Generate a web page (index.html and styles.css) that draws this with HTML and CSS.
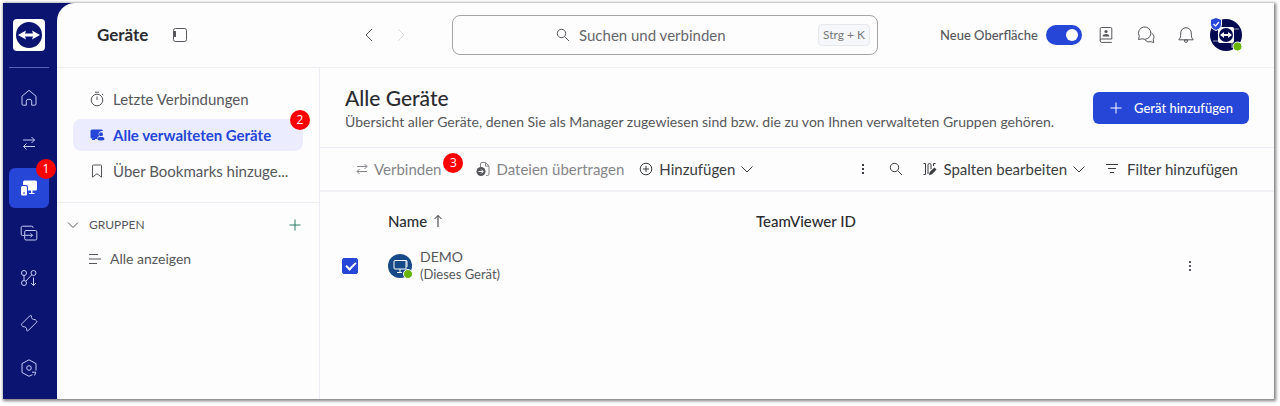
FILE: index.html
```
<!DOCTYPE html>
<html lang="de">
<head>
  <meta charset="UTF-8" />
  <meta name="viewport" content="width=device-width, initial-scale=1.0"/>
  <title>Alle Geräte</title>
  <link rel="stylesheet" href="styles.css">
</head>
<body>
  <div class="app">
    <nav class="rail" aria-label="Hauptnavigation">
      <a href="#" class="logo" aria-label="TeamViewer">
        <svg width="32" height="32" viewBox="0 0 32 32">
          <rect width="32" height="32" rx="4" fill="#fff"/>
          <circle cx="16" cy="16" r="13" fill="#0b1571"/>
          <path d="M5 16l8-4.500-1 3h8l-1-3 8 4.500-8 4.500 1-3h-8l1 3z" fill="#fff"/>
        </svg>
      </a>
      <ul class="rail-list">
        <li><a href="#" aria-label="Start"><svg width="18" height="18" viewBox="0 0 18 18"><path d="M2 7.200L9 1.300l7 5.900v7.800q0 1.200-1.200 1.200h-3.100v-4q0-2-2.700-2t-2.700 2v4H3.200Q2 16.200 2 15z"/></svg></a></li>
        <li><a href="#" aria-label="Verbindungen"><svg width="18" height="18" viewBox="0 0 18 18"><path d="M3 6h11.500M11.500 3l3 3-3 3M15 12.500H3.500M6.500 9.500l-3 3 3 3"/></svg></a></li>
        <li>
          <a href="#" class="active" aria-label="Geräte"><svg width="18" height="18" viewBox="0 0 18 18"><path class="solid" d="M4.500 1.500h11q1.500 0 1.500 1.500v7q0 1.500-1.500 1.500h-3v2.500h2v1H9v-1h2v-2.500H8V8q0-2-2-2H3V3q0-1.500 1.500-1.500z"/><path class="solid" fill-rule="evenodd" d="M2.500 7h3Q7 7 7 8.500v6.500q0 1.500-1.500 1.500h-3Q1 16.500 1 15V8.500Q1 7 2.500 7zM3 13.500v1h2v-1z"/></svg></a>
          <span class="marker">1</span>
        </li>
        <li><a href="#" aria-label="Sitzungen"><svg width="18" height="18" viewBox="0 0 18 18"><path d="M4 11.500H2.500q-1.300 0-1.300-1.300V3.500q0-1.300 1.300-1.300h9.200q1.300 0 1.300 1.300V4M6 6.500h9.500q1.300 0 1.300 1.300v6.900q0 1.300-1.300 1.300H6q-1.300 0-1.300-1.300V7.800Q4.700 6.500 6 6.500zM5 11.300h7.500M10.500 9.300l2 2-2 2"/></svg></a></li>
        <li><a href="#" aria-label="Automatisierung"><svg width="18" height="18" viewBox="0 0 18 18"><circle cx="4" cy="4" r="2.500"/><circle cx="4" cy="14" r="2.500"/><circle cx="13.500" cy="4" r="2.500"/><path d="M4 6.500v5M5.800 12.200l6-6.400M13.500 8.500v8M11 14l2.500 2.500L16 14"/></svg></a></li>
        <li><a href="#" aria-label="Tickets"><svg width="18" height="18" viewBox="0 0 18 18"><path d="M1.800 9.800l8-8q.8-.8 1.600 0-.3 2 .8 3t3 .8l1.300 1.300q.7.700 0 1.400l-8.200 8.200q-.8.800-1.600 0 .3-2-.8-3t-3-.8L1.800 11.400q-.8-.8 0-1.600z"/></svg></a></li>
        <li><a href="#" aria-label="Administration"><svg width="18" height="18" viewBox="0 0 18 18"><path d="M12.500 15.700L9 17.300l-7-3.800V4.600L9 .8l7 3.800v6.900M12 13.200h3.800M15.800 13.200l-1.300 3.300"/><circle cx="9" cy="9" r="2.300"/></svg></a></li>
      </ul>
    </nav>

    <div class="page">
      <header class="topbar">
        <div class="topbar-title">
          <h1>Geräte</h1>
          <button type="button" aria-label="Seitenleiste"><svg width="16" height="16" viewBox="0 0 16 16"><rect x="1.500" y="1.500" width="13" height="13" rx="2"/><path d="M3 4v6" stroke-width="2"/></svg></button>
        </div>
        <div class="history">
          <button type="button" aria-label="Zurück"><svg width="16" height="16" viewBox="0 0 16 16"><path d="M11 2L5 8l6 6"/></svg></button>
          <button type="button" aria-label="Vorwärts" disabled><svg width="16" height="16" viewBox="0 0 16 16"><path d="M5 2l6 6-6 6"/></svg></button>
        </div>
        <label class="search">
          <svg width="14" height="14" viewBox="0 0 14 14"><circle cx="5.500" cy="5.500" r="4.200"/><path d="M8.700 8.700L13 13"/></svg>
          <input type="text" placeholder="Suchen und verbinden" aria-label="Suchen und verbinden">
          <kbd>Strg + K</kbd>
        </label>
        <div class="tools">
          <label class="switch">Neue Oberfläche <input type="checkbox" checked></label>
          <button type="button" aria-label="Kontakte"><svg width="18" height="18" viewBox="0 0 18 18"><path d="M4.500 1.500h9q1.300 0 1.300 1.300V13H4.700q-1.500 0-1.500 1.700t1.500 1.700h10.100M3.200 14.500V2.800q0-1.300 1.300-1.300"/><circle class="solid" cx="9" cy="5.500" r="1.600"/><path class="solid" d="M5.800 10.500V9.700q0-1.700 3.200-1.700t3.200 1.700v.8z"/></svg></button>
          <button type="button" aria-label="Chat"><svg width="18" height="18" viewBox="0 0 18 18"><path d="M1.500 13.500l.8-3.300a6.200 6.200 0 1 1 2.900 2.600zM14.500 7q4 3 1.700 6.500l.6 3-3-.8q-3.300 1.200-5.600-1.500"/></svg></button>
          <button type="button" aria-label="Benachrichtigungen"><svg width="18" height="18" viewBox="0 0 18 18"><path d="M1.800 13.800q1.900-1.800 1.900-4.600V7a5.300 5.300 0 0 1 10.600 0v2.200q0 2.800 1.900 4.600z"/><path d="M7.300 14q0 2.500 1.700 2.500t1.700-2.500z"/></svg></button>
          <a href="#" class="avatar" aria-label="Profil">
            <svg width="34" height="36" viewBox="0 0 34 36">
              <circle cx="17" cy="18" r="16" fill="#050a50"/>
              <rect x="9" y="10" width="16" height="16" rx="2" fill="#fff"/>
              <path d="M11 10V5M25 12h5M23 26v5M9 24H4" stroke="#fff" stroke-width="1" opacity=".6"/>
              <circle cx="17" cy="18" r="7" fill="#050a50"/>
              <path d="M11 18l4-3v2h4v-2l4 3-4 3v-2h-4v2z" fill="#fff"/>
              <path d="M1.500 2.500L7 .5l5.500 2v4.500q0 4.500-5.500 6.500Q1.500 11.500 1.500 7z" fill="#2546d6" stroke="#fff"/>
              <path d="M4.500 7l2 2 3.500-4" fill="none" stroke="#fff" stroke-width="1.200"/>
              <circle cx="28.500" cy="29.500" r="4.500" fill="#68b500" stroke="#fff"/>
            </svg>
          </a>
        </div>
      </header>

      <div class="content">
        <aside class="sidebar">
          <ul class="views">
            <li><a href="#"><svg width="16" height="16" viewBox="0 0 16 16"><circle cx="8" cy="9" r="5.800"/><path d="M8 5.500V9M6 1.200h4M13 3l1.200 1.200"/></svg>Letzte Verbindungen</a></li>
            <li>
              <a href="#" class="active"><svg width="16" height="16" viewBox="0 0 16 16"><path class="solid" d="M3 2.500h9.500Q14 2.500 14 4q-4-.5-4.500 3 .2 1.500 1 2-2.300.5-2.500 3H6v1H3v-1l1-.5H3Q1.500 11.500 1.500 10V4Q1.500 2.500 3 2.500z"/><circle class="solid" cx="12" cy="7.200" r="2"/><path class="solid" d="M8.500 12.500v-1q.2-1.500 2-1.500h3q1.600 0 1.800 1.500v1q-.2 1-3.300 1t-3.500-1z"/></svg>Alle verwalteten Geräte</a>
              <span class="marker">2</span>
            </li>
            <li><a href="#"><svg width="16" height="16" viewBox="0 0 16 16"><path d="M3.500 14.200V2.800q0-.8.800-.8h7.400q.8 0 .8.800v11.400L8 10.700z"/></svg>Über Bookmarks hinzuge...</a></li>
          </ul>
          <div class="groups">
            <div class="groups-header">
              <button type="button" class="groups-toggle"><svg width="12" height="12" viewBox="0 0 12 12"><path d="M1 3.500l5 5 5-5"/></svg>GRUPPEN</button>
              <button type="button" class="groups-add" aria-label="Gruppe hinzufügen"><svg width="12" height="12" viewBox="0 0 12 12"><path d="M6 .5v11M.5 6h11"/></svg></button>
            </div>
            <a href="#" class="show-all"><svg width="14" height="14" viewBox="0 0 14 14"><path d="M1 2.500h9M1 7h12M1 11.500h8"/></svg>Alle anzeigen</a>
          </div>
        </aside>

        <main class="main">
          <div class="intro">
            <div class="intro-text">
              <h2>Alle Geräte</h2>
              <p>Übersicht aller Geräte, denen Sie als Manager zugewiesen sind bzw. die zu von Ihnen verwalteten Gruppen gehören.</p>
            </div>
            <button type="button" class="primary"><svg width="12" height="12" viewBox="0 0 12 12"><path d="M6 .5v11M.5 6h11"/></svg>Gerät hinzufügen</button>
          </div>

          <div class="toolbar">
            <div class="connect">
              <button type="button" disabled><svg width="12" height="12" viewBox="0 0 12 12"><path d="M1 3.500h10M8.500 1L11 3.500 8.500 6M11 8.500H1M3.500 6L1 8.500 3.500 11"/></svg>Verbinden</button>
              <span class="marker">3</span>
            </div>
            <button type="button" disabled><svg width="14" height="16" viewBox="0 0 14 16"><path d="M4.500 6V3q0-1.500 1.500-1.500h3.500l3.500 3.500v8q0 1.500-1.500 1.500H10M9.500 1.500V5H13"/><circle cx="5" cy="10.500" r="4.500" fill="#56575c" stroke="none"/><path d="M2.500 10.500h4.500M5.200 8.500l2 2-2 2" stroke="#fff"/></svg>Dateien übertragen</button>
            <button type="button"><svg width="14" height="14" viewBox="0 0 14 14"><circle cx="7" cy="7" r="5.800"/><path d="M7 4v6M4 7h6"/></svg>Hinzufügen<svg width="12" height="12" viewBox="0 0 12 12"><path d="M.5 3.500L6 9l5.500-5.500"/></svg></button>
            <div class="toolbar-right">
              <button type="button" aria-label="Mehr"><svg width="12" height="12" viewBox="0 0 12 12"><path d="M5 1h2v2H5zM5 5h2v2H5zM5 9h2v2H5z" class="dots"/></svg></button>
              <button type="button" aria-label="Suchen"><svg width="14" height="14" viewBox="0 0 14 14"><circle cx="5.500" cy="5.500" r="4.200"/><path d="M8.700 8.700L13 13"/></svg></button>
              <button type="button"><svg width="14" height="14" viewBox="0 0 14 14"><path d="M.5 1.500h2v11h-2M5 12V3q0-1.500 1.500-1.500T8 3v4M10.500 4V1.500h2"/><path class="solid" d="M6 13.200l.7-3.200L11.500 5.500l2 2L9 12.300z"/></svg>Spalten bearbeiten<svg width="12" height="12" viewBox="0 0 12 12"><path d="M.5 3.500L6 9l5.500-5.500"/></svg></button>
              <button type="button" class="filter"><svg width="14" height="14" viewBox="0 0 14 14"><path d="M1 2.500h12M3 6.500h8M5 10.500h4"/></svg>Filter hinzufügen</button>
            </div>
          </div>

          <table class="devices">
            <thead>
              <tr>
                <th class="col-check"></th>
                <th class="col-name"><button type="button">Name<svg width="10" height="14" viewBox="0 0 10 14"><path d="M5 13V1.500M1.500 5L5 1.500 8.500 5"/></svg></button></th>
                <th>TeamViewer ID</th>
                <th class="col-more"></th>
              </tr>
            </thead>
            <tbody>
              <tr>
                <td class="col-check"><input type="checkbox" aria-label="DEMO" checked></td>
                <td>
                  <div class="device">
                    <svg width="26" height="26" viewBox="0 0 26 26">
                      <circle cx="12" cy="13" r="12" fill="#174a86" stroke="none"/>
                      <path d="M7 7.500h11v8.500H7q-1 0-1-1V8.500q0-1 1-1zM18 7.500q1 0 1 1V14M12 16v3M9 19.500h5" stroke="#fff"/>
                      <circle cx="20" cy="21" r="4.500" fill="#68b500" stroke="#fff"/>
                    </svg>
                    <div>
                      <div class="device-name">DEMO</div>
                      <div class="device-note">(Dieses Gerät)</div>
                    </div>
                  </div>
                </td>
                <td></td>
                <td class="col-more"><button type="button" aria-label="Optionen"><svg width="12" height="12" viewBox="0 0 12 12"><path d="M5 1h2v2H5zM5 5h2v2H5zM5 9h2v2H5z" class="dots"/></svg></button></td>
              </tr>
            </tbody>
          </table>
        </main>
      </div>
    </div>
  </div>
</body>
</html>
```
FILE: styles.css
```
* { box-sizing: border-box; }
body {
  margin: 0;
  padding: 3px 6px 7px 3px;
  background: #fff;
  color: #56575c;
  font-family: Lato, "Open Sans", sans-serif;
  font-size: 15px;
  line-height: 20px;
}
h1, h2, p, ul {
  margin: 0;
  padding: 0;
}
ul { list-style: none; }
a {
  color: inherit;
  text-decoration: none;
}
button {
  display: flex;
  align-items: center;
  padding: 0;
  border: none;
  background: none;
  color: inherit;
  font: inherit;
  white-space: nowrap;
  cursor: pointer;
}
svg {
  display: block;
  flex: none;
  fill: none;
  stroke: currentColor;
  stroke-linejoin: round;
}
.logo svg, .avatar svg { stroke: none; }
.solid, .dots {
  fill: currentColor;
  stroke: none;
}
.app {
  display: flex;
  min-height: calc(100vh - 10px);
  background: #0b1571;
  box-shadow: 1px 1px 3px 1px rgba(0,0,0,0.5);
}

/* left icon rail */
.rail {
  flex: none;
  width: 54px;
  padding: 16px 6px 0;
  color: #c5caf5;
}
.logo {
  display: block;
  width: 40px;
  padding: 0 4px 16px;
  border-bottom: 1px solid #5a62b0;
}
.rail-list {
  display: grid;
  gap: 5px;
  width: 40px;
  margin-top: 10px;
}
.rail-list li, .views li, .connect { position: relative; }
.rail-list a {
  display: flex;
  align-items: center;
  justify-content: center;
  height: 40px;
  border-radius: 6px;
}
.rail-list .active {
  background: #2546d6;
  color: #fff;
}
.marker {
  position: absolute;
  top: -9px;
  right: -7px;
  width: 20px;
  height: 20px;
  border-radius: 50%;
  background: #f00;
  color: #fff;
  font: 12px/20px "Open Sans", sans-serif;
  text-align: center;
}

/* top bar */
.page {
  flex: 1;
  min-width: 0;
  display: flex;
  flex-direction: column;
  background: #fdfdfd;
  border-top-left-radius: 18px;
}
.topbar {
  display: flex;
  align-items: center;
  height: 65px;
  padding-right: 31px;
  border-bottom: 1px solid #f0f0f3;
}
.topbar-title {
  display: flex;
  align-items: center;
  gap: 24px;
  width: 263px;
  padding-left: 40px;
}
.topbar h1 {
  color: #2b2c30;
  font-size: 17px;
  font-weight: 700;
}
.history {
  display: flex;
  gap: 16px;
  width: 91px;
  margin-left: 41px;
}
.history button:disabled { color: #dcdce0; }
.search {
  display: flex;
  align-items: center;
  flex: 0 1 426px;
  height: 40px;
  padding: 0 7px 0 103px;
  border: 1px solid #a3a4a8;
  border-radius: 8px;
}
.search input {
  flex: 1;
  min-width: 0;
  margin-left: 9px;
  padding: 0;
  border: none;
  outline: none;
  background: none;
  color: inherit;
  font: inherit;
}
.search input::placeholder {
  color: #65666b;
  opacity: 1;
}
.search kbd {
  padding: 0 4px;
  border: 1px solid #e6e8ee;
  border-radius: 4px;
  background: #f6f7fa;
  color: #77787e;
  font-family: inherit;
  font-size: 12px;
}
.tools {
  display: flex;
  align-items: center;
  gap: 22px;
  margin-left: auto;
}
.switch {
  display: flex;
  align-items: center;
  gap: 8px;
  margin-right: -7px;
  font-size: 13px;
  font-weight: 500;
  white-space: nowrap;
}
.switch input {
  appearance: none;
  width: 36px;
  height: 20px;
  margin: 0;
  padding: 4px;
  border-radius: 10px;
  background: #2546d6;
}
.switch input::before {
  content: "";
  display: block;
  width: 12px;
  height: 12px;
  border-radius: 50%;
  background: #fff;
}
.switch input:checked::before { margin-left: auto; }
.avatar { margin-left: -8px; }

/* sidebar */
.content {
  flex: 1;
  display: flex;
}
.sidebar {
  flex: none;
  width: 263px;
  border-right: 1px solid #ececf4;
}
.views {
  display: grid;
  gap: 4px;
  padding: 15px 16px;
  border-bottom: 1px solid #ececf4;
}
.views a {
  display: flex;
  align-items: center;
  gap: 8px;
  height: 32px;
  padding-left: 16px;
  border-radius: 8px;
  white-space: nowrap;
}
.views .active {
  background: #ebecfd;
  color: #2546d6;
  font-weight: 700;
}
.groups { padding: 12px 18px 0 10px; }
.groups-header {
  display: flex;
  align-items: center;
  justify-content: space-between;
}
.groups-toggle {
  gap: 10px;
  font-size: 12px;
}
.groups-add { color: #2f7d6b; }
.show-all {
  display: flex;
  align-items: center;
  gap: 8px;
  margin-top: 14px;
  padding-left: 21px;
  font-size: 14px;
}

/* device list */
.main {
  flex: 1;
  min-width: 0;
}
.intro {
  display: flex;
  align-items: center;
  justify-content: space-between;
  gap: 16px;
  min-height: 80px;
  padding: 0 25px;
  border-bottom: 1px solid #ececf4;
  font-size: 14px;
}
.intro h2 {
  color: #2b2c30;
  font-size: 21px;
  font-weight: 500;
  line-height: 28px;
}
.primary {
  gap: 12px;
  height: 32px;
  padding: 0 16px 0 17px;
  border-radius: 6px;
  background: #2546d6;
  color: #fff;
  font-size: 13px;
  font-weight: 500;
}
.toolbar {
  display: flex;
  align-items: center;
  gap: 15px;
  height: 44px;
  padding: 0 36px;
  border-bottom: 2px solid #f1f1f5;
  color: #3b3c41;
}
.toolbar button { gap: 6px; }
.toolbar button:disabled { color: #85868b; }
.connect { padding-right: 20px; }
.connect .marker {
  top: -6px;
  right: -2px;
}
.toolbar-right {
  display: flex;
  gap: 20px;
  margin-left: auto;
}
.toolbar-right .filter { gap: 8px; }
.devices {
  width: 100%;
  border-collapse: collapse;
  table-layout: fixed;
}
.devices th, .devices td {
  padding: 0;
  text-align: left;
}
.devices th {
  height: 57px;
  color: #2b2c30;
  font-weight: 500;
}
.devices th button { gap: 6px; }
.devices .col-check {
  width: 68px;
  padding-left: 22px;
}
.col-name { width: 368px; }
.devices .col-more { width: 168px; }
.col-more button { margin: 0 auto; }
.col-check input {
  appearance: none;
  display: block;
  width: 16px;
  height: 16px;
  margin: 0;
  padding: 3px 4px;
  border: 1px solid #2546d6;
  border-radius: 2px;
}
.col-check input:checked { background: #2546d6; }
.col-check input:checked::before {
  content: "";
  display: block;
  width: 8px;
  height: 4px;
  margin-left: -1px;
  border-left: 2px solid #fff;
  border-bottom: 2px solid #fff;
  transform: rotate(-45deg);
}
.device {
  display: flex;
  align-items: center;
  gap: 6px;
}
.device-name {
  font-size: 14px;
  line-height: 16px;
}
.device-note {
  font-size: 13px;
  line-height: 18px;
}
```
